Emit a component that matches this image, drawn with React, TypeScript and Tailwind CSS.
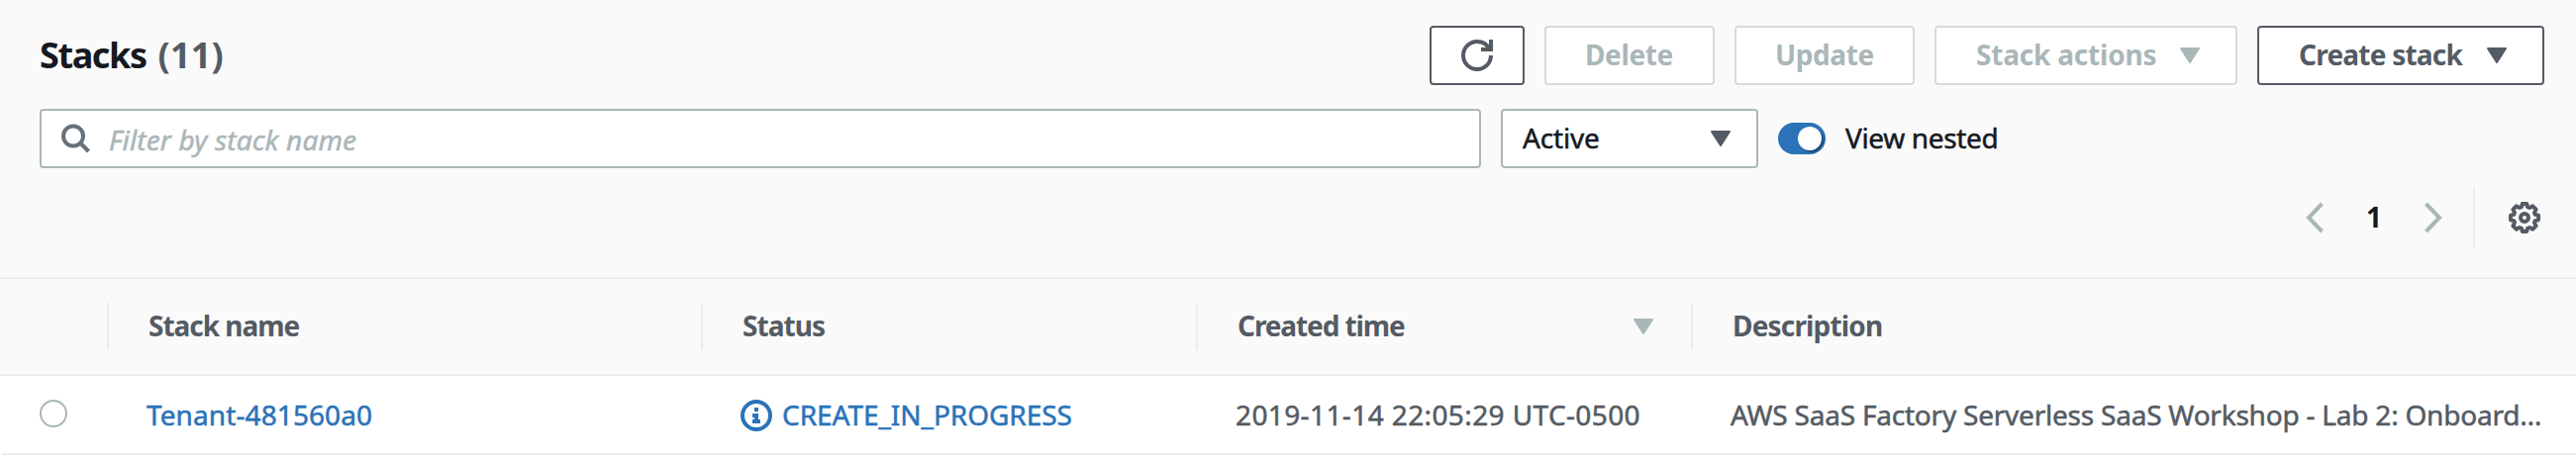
import type { ReactNode } from "react";

function Caret({ className = "" }: { className?: string }) {
  return (
    <svg className={"block h-4 w-5 shrink-0 " + className} viewBox="0 0 20 16" fill="currentColor" stroke="currentColor" strokeWidth="2" strokeLinejoin="round">
      <path d="M1 1h18L10 15z" />
    </svg>
  );
}

function Button({ className, children }: { className: string; children: ReactNode }) {
  return (
    <button className={"flex h-[60px] items-center rounded-[4px] border-2 bg-white text-[28px] font-bold leading-[36px] whitespace-nowrap " + className}>
      {children}
    </button>
  );
}

function HeaderCell({ className = "border-r-2", children }: { className?: string; children?: ReactNode }) {
  return (
    <div className={"flex h-12 items-center border-[#eaeded] pb-0.5 whitespace-nowrap " + className}>
      {children}
    </div>
  );
}

export default function App() {
  return (
    <div className="h-[466px] w-[2602px] overflow-hidden bg-white font-['Noto_Sans',sans-serif] text-[28px] leading-[36px] text-[#545b64]">
      <div className="h-[282px] border-b-2 border-[#eaeded] bg-[#fafafa] pt-[26px] pr-8 pl-10">
        <div className="flex h-[60px] items-center justify-between">
          <h2 className="flex gap-3 text-[36px] leading-[48px] font-bold">
            <span className="tracking-[-1.4px] text-[#16191f]">Stacks</span>
            <span className="tracking-[0.2px]">(11)</span>
          </h2>
          <div className="flex gap-5">
            <Button className="w-24 justify-center border-[#545b64]">
              <svg className="h-8 w-8" viewBox="0 0 16 16" fill="none" stroke="currentColor" strokeWidth="2">
                <path d="M15 8c0 3.87-3.13 7-7 7s-7-3.13-7-7 3.13-7 7-7c2.79 0 5.2 1.63 6.33 4" />
                <path d="M10 5h5V0" />
              </svg>
            </Button>
            <Button className="w-[172px] border-[#d5dbdb] pb-0.5 pl-[39px] text-[#aab7b8]">
              <span className="tracking-[-0.38px]">Delete</span>
            </Button>
            <Button className="w-[182px] border-[#d5dbdb] pb-0.5 pl-[39px] text-[#aab7b8]">
              <span className="tracking-[-0.4px]">Update</span>
            </Button>
            <Button className="w-[306px] justify-between border-[#d5dbdb] pr-9 pl-10 text-[#aab7b8]">
              <span className="pb-0.5 tracking-[-0.2px]">Stack actions</span>
              <Caret />
            </Button>
            <Button className="w-[290px] justify-between border-[#545b64] pr-9 pl-10">
              <span className="pb-0.5 tracking-[-0.77px]">Create stack</span>
              <Caret />
            </Button>
          </div>
        </div>

        <div className="mt-6 flex h-[60px] items-center [-webkit-text-stroke-width:0.5px]">
          <div className="flex h-[60px] w-[1456px] items-center rounded-[4px] border-2 border-[#aab7b8] bg-white pl-5">
            <svg className="h-[30px] w-[30px] text-[#687078]" viewBox="0 0 30 30" fill="none" stroke="currentColor" strokeWidth="4">
              <circle cx="12" cy="12.5" r="10" />
              <path d="M19 19.5l8.5 8.5" />
            </svg>
            <span className="pt-0.5 pl-[18px] tracking-[0.15px] text-[#aab7b8] italic">Filter by stack name</span>
          </div>
          <div className="ml-5 flex h-[60px] w-[260px] items-center justify-between rounded-[4px] border-2 border-[#aab7b8] bg-white pr-[26px] pl-5">
            <span className="pb-0.5 tracking-[-0.18px] text-[#16191f]">Active</span>
            <Caret />
          </div>
          <div className="ml-5 flex h-8 w-12 items-center justify-end rounded-full bg-[#2a73b8] pr-1">
            <div className="h-6 w-6 rounded-full bg-white shadow-[2px_2px_2px_rgba(0,0,0,0.35)]" />
          </div>
          <span className="ml-5 pb-0.5 tracking-[-0.35px] text-[#16191f]">View nested</span>
        </div>

        <div className="mt-5 flex h-[60px] items-center justify-end">
          <svg className="h-8 w-5 text-[#aab7b8]" viewBox="0 0 20 32" fill="none" stroke="currentColor" strokeWidth="4">
            <path d="M17.5 2L4 16l13.5 14" />
          </svg>
          <span className="w-[100px] pb-0.5 text-center font-bold text-[#16191f]">1</span>
          <svg className="h-8 w-5 text-[#aab7b8]" viewBox="0 0 20 32" fill="none" stroke="currentColor" strokeWidth="4">
            <path d="M2.500 2L16 16 2.500 30" />
          </svg>
          <div className="ml-[30px] h-[60px] w-0.5 bg-[#eaeded]" />
          <svg className="mr-1 ml-[34px] h-8 w-8" viewBox="0 0 32 32" fill="none" stroke="currentColor" strokeWidth="4" strokeLinejoin="round">
            <path d="M13.800 2h4.400l.9 3.200 1.900.8 3.300-1.600 3.300 3.300L26 11l.8 1.900 3.200.9v4.400l-3.200.9L26 21l1.600 3.300-3.300 3.300L21 26l-1.900.8-.9 3.200h-4.400l-.9-3.200L11 26l-3.300 1.600-3.300-3.300L6 21l-.8-1.900L2 18.200v-4.400l3.200-.9L6 11 4.400 7.700l3.300-3.300L11 6l1.900-.8z" />
            <circle cx="16" cy="16" r="4" />
          </svg>
        </div>
      </div>

      <div className="grid h-[98px] grid-cols-[110px_600px_500px_500px_1fr] items-center border-b-2 border-[#eaeded] bg-[#fafafa] font-bold">
        <HeaderCell />
        <HeaderCell className="border-r-2 pl-10 tracking-[-1.02px]">Stack name</HeaderCell>
        <HeaderCell className="border-r-2 pl-10 tracking-[-0.94px]">Status</HeaderCell>
        <HeaderCell className="justify-between border-r-2 pr-[38px] pl-10">
          <span className="tracking-[-1.1px]">Created time</span>
          <Caret className="mt-0.5 text-[#aab7b8]" />
        </HeaderCell>
        <HeaderCell className="pl-10 tracking-[-0.83px]">Description</HeaderCell>
      </div>

      <div className="grid h-[78px] grid-cols-[148px_600px_500px_500px_1fr] items-center whitespace-nowrap [-webkit-text-stroke-width:0.5px]">
        <div className="pb-0.5 pl-10">
          <div className="h-7 w-7 rounded-full border-2 border-[#aab7b8] bg-white" />
        </div>
        <a className="tracking-[0.1px] text-[#2a73b8]">Tenant-481560a0</a>
        <div className="flex items-center gap-2.5 text-[#2a73b8]">
          <svg className="mt-0.5 h-8 w-8" viewBox="0 0 32 32">
            <circle cx="16" cy="16" r="14" fill="none" stroke="currentColor" strokeWidth="4" />
            <path d="M14 8h4v4h-4zM12 14h6v6h2v4h-8v-4h2v-2h-2z" fill="currentColor" />
          </svg>
          <span className="tracking-[-0.05px]">CREATE_IN_PROGRESS</span>
        </div>
        <div className="tracking-[0.39px]">2019-11-14 22:05:29 UTC-0500</div>
        <div className="tracking-[-0.22px]">AWS SaaS Factory Serverless SaaS Workshop - Lab 2: Onboard…</div>
      </div>
      <div className="ml-0.5 h-0.5 bg-[#eaeded]" />
    </div>
  );
}
